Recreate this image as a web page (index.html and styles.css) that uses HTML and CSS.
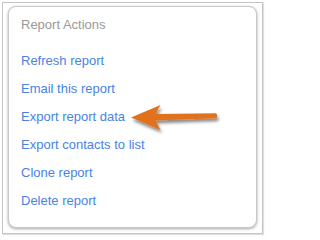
FILE: index.html
```html
<!DOCTYPE html>
<html>
<head>
<meta charset="utf-8">
<link rel="stylesheet" href="styles.css">
</head>
<body>
<div class="frame">
  <div class="card">
    <div class="title">Report Actions</div>
    <ul class="actions">
      <li><a href="#">Refresh report</a></li>
      <li><a href="#">Email this report</a></li>
      <li><a href="#">Export report data</a></li>
      <li><a href="#">Export contacts to list</a></li>
      <li><a href="#">Clone report</a></li>
      <li><a href="#">Delete report</a></li>
    </ul>
  </div>
  <svg class="arrow" width="265" height="237" viewBox="0 0 265 237">
    <defs>
      <filter id="sh" x="-20%" y="-50%" width="140%" height="200%">
        <feDropShadow dx="1.5" dy="3" stdDeviation="1.6" flood-color="#000" flood-opacity="0.45"/>
      </filter>
    </defs>
    <path filter="url(#sh)" fill="#e2711f" d="M131,117.5 L160.5,105 L155.5,114 L216,113.3 Q218.5,115.8 216,118.3 L155.5,120.5 L160.5,130 Z"/>
  </svg>
</div>
</body>
</html>
```
FILE: styles.css
```css
html, body {
  margin: 0;
  padding: 0;
  background: #fff;
}
body {
  font-family: "Liberation Sans", Arial, sans-serif;
  width: 265px;
  height: 237px;
  overflow: hidden;
}
.frame {
  position: relative;
  margin: 2px 2px 3px 2px;
  height: 230px;
  border: 1px solid #c4c4c4;
  box-shadow: 1px 1px 1px rgba(0,0,0,0.12);
  padding: 3px 5px 0 5px;
  box-sizing: border-box;
  height: 232px;
}
.card {
  height: 222px;
  box-sizing: border-box;
  border: 1px solid #c8c8c8;
  border-radius: 8px;
  box-shadow: 0 1px 3px rgba(0,0,0,0.35);
  padding: 10px 12px 0 12px;
  background: #fff;
}
.title {
  font-size: 13px;
  line-height: 16px;
  color: #999;
  margin-bottom: 14px;
}
.actions {
  list-style: none;
  margin: 0;
  padding: 0;
}
.actions li {
  font-size: 13px;
  line-height: 28px;
}
.actions a {
  color: #4a82e4;
  text-decoration: none;
}
.arrow {
  position: absolute;
  left: -3px;
  top: -3px;
}
```
